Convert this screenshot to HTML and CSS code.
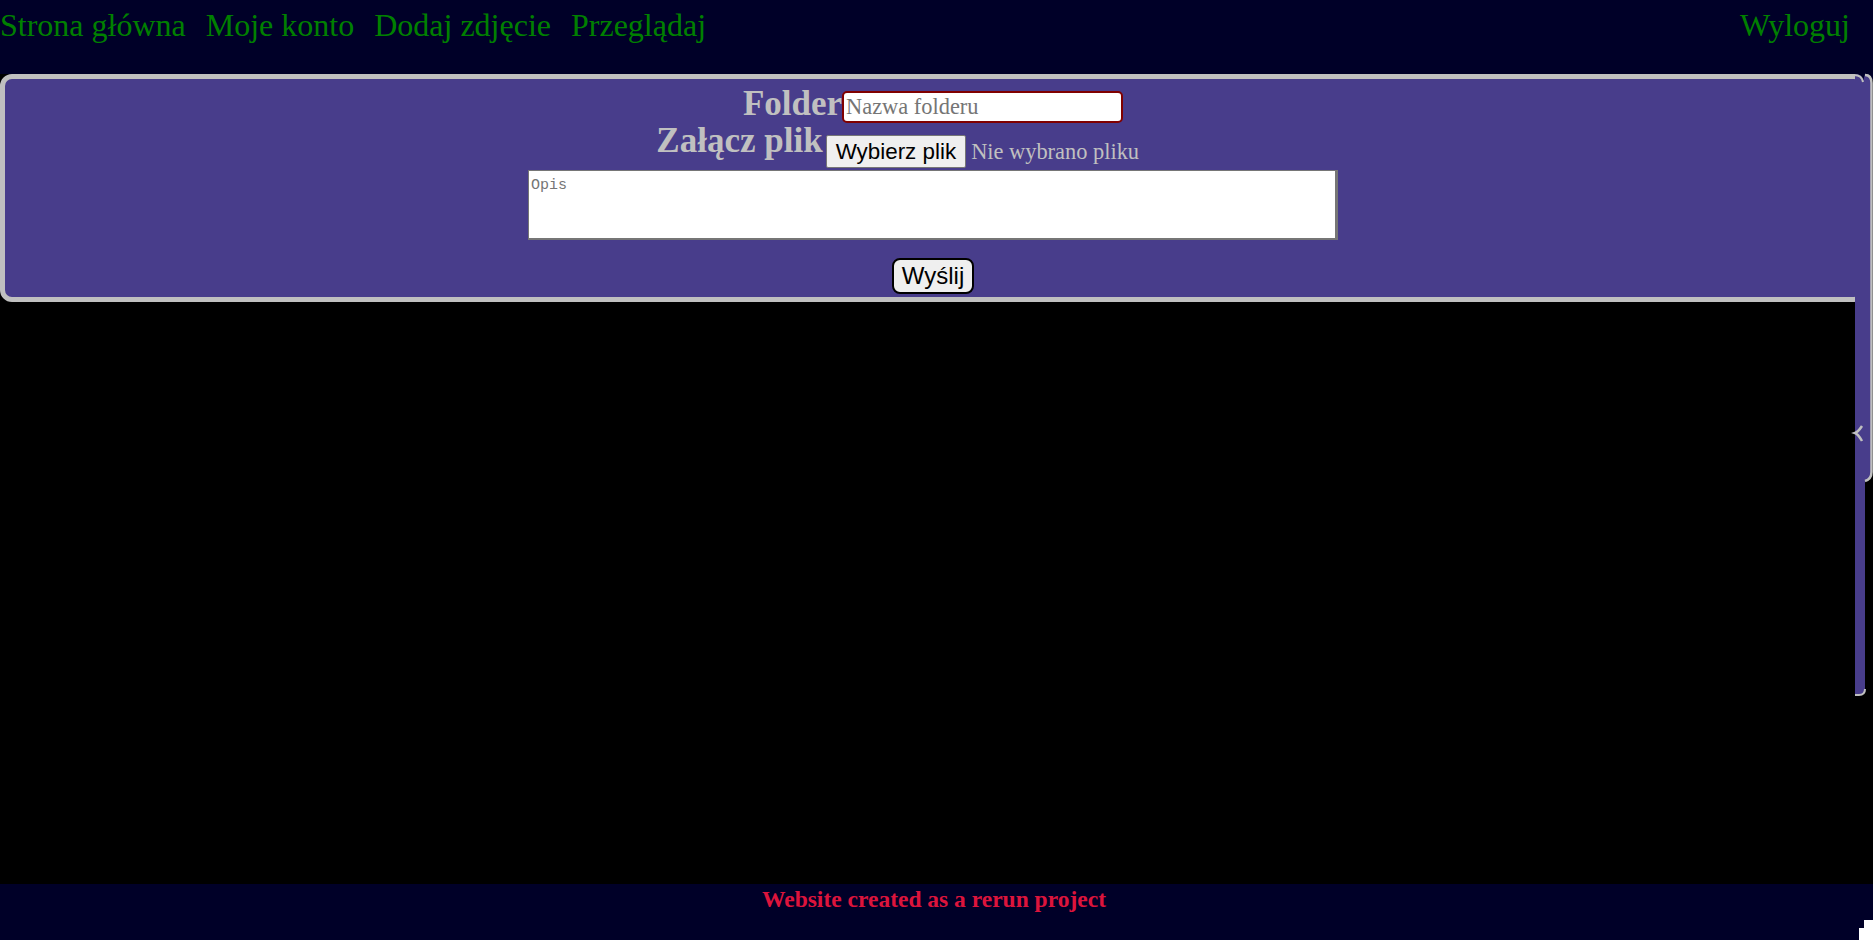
FILE: index.html
```html
<!DOCTYPE html>
<html lang="pl">
<head>
<meta charset="utf-8">
<title>Dodaj zdjęcie</title>
<link rel="stylesheet" href="styles.css">
</head>
<body>
<nav class="topnav">
  <div class="nav-left">
    <a href="#">Strona główna</a>
    <a href="#">Moje konto</a>
    <a href="#">Dodaj zdjęcie</a>
    <a href="#">Przeglądaj</a>
  </div>
  <a class="nav-right" href="#">Wyloguj</a>
</nav>
<main class="content">
  <form class="upload">
    <div class="row row-folder">
      <label class="field-label" for="folder">Folder</label>
      <input id="folder" class="text-input" type="text" placeholder="Nazwa folderu">
    </div>
    <div class="row row-file">
      <label class="field-label field-label-file" for="plik">Załącz plik</label>
      <label class="file" for="plik">
        <input id="plik" class="file-native" type="file">
        <span class="file-btn">Wybierz plik</span>
        <span class="file-name">Nie wybrano pliku</span>
      </label>
    </div>
    <textarea class="desc" placeholder="Opis"></textarea>
    <button class="submit" type="submit">Wyślij</button>
  </form>
  <svg class="edge" width="28" height="630" viewBox="0 0 28 630" aria-hidden="true">
    <rect x="10" y="0" width="18" height="10" fill="#000028"/>
    <path d="M10 4 Q18 4 18 11 L20 4 Q26.5 4 26.5 12 V402 Q26.5 410 20 410 H10 Z" fill="#483d8b"/>
    <path d="M10 405 H20 V619 Q20 625 14 625 H10 Z" fill="#483d8b"/>
    <path d="M9 5 Q17 5 18 12" fill="none" stroke="#c0c0c0" stroke-width="2"/>
    <path d="M20 5 Q26.5 5 26.5 13 V402 Q26.5 409 20 411" fill="none" stroke="#c0c0c0" stroke-width="2.5"/>
    <path d="M17 356 Q13 362 10 363 Q13 364 17 371" fill="none" stroke="#c0c0c0" stroke-width="2.5"/>
    <path d="M10 625 H14 Q20 625 20 619" fill="none" stroke="#c0c0c0" stroke-width="2"/>
  </svg>
</main>
<footer class="footer">
  <p class="footer-text">Website created as a rerun project</p>
  <div class="corner"></div>
</footer>
</body>
</html>
```
FILE: styles.css
```css
html, body {
  margin: 0;
  height: 940px;
  overflow: hidden;
}

body {
  background: #000;
  font-family: "Liberation Serif", "Times New Roman", serif;
}

.topnav {
  height: 74px;
  box-sizing: border-box;
  padding: 7px 23px 0 0;
  background: #000028;
  display: flex;
  justify-content: space-between;
  align-items: flex-start;
}

.nav-left {
  display: flex;
  gap: 20px;
}

.topnav a {
  color: #008000;
  font-size: 32px;
  line-height: normal;
  text-decoration: none;
}

.content {
  height: 810px;
  position: relative;
}

.upload {
  width: 1866px;
  box-sizing: border-box;
  border: 5px solid #c0c0c0;
  border-radius: 12px;
  background: #483d8b;
  padding: 6px 0 3px;
  display: flex;
  flex-direction: column;
  align-items: center;
}

.row {
  display: flex;
  justify-content: center;
  align-items: flex-start;
}

.row-folder {
  height: 37px;
}

.row-file {
  height: 48px;
}

.field-label {
  font-size: 35px;
  font-weight: bold;
  line-height: 37px;
  color: #c0c0c0;
}

.field-label-file {
  margin-right: 3px;
}

.text-input {
  margin: 6px 0 0;
  width: 281px;
  height: 32px;
  box-sizing: border-box;
  border: 2px solid #800000;
  border-radius: 5px;
  padding: 1px 2px;
  font: 22.4px "Liberation Serif", "Times New Roman", serif;
  background: #fff;
  color: #000;
  outline: none;
}

.text-input::placeholder {
  color: #757575;
}

.file {
  display: flex;
  align-items: baseline;
  margin-top: 13px;
  width: 384px;
  cursor: pointer;
}

.file-native {
  display: none;
}

.file-btn {
  font: 22.4px/25px "Liberation Sans", Arial, sans-serif;
  color: #000;
  background: #efefef;
  border: 1px solid #767676;
  border-radius: 2px;
  padding: 3px 9px;
  margin-right: 5px;
}

.file-name {
  font-size: 22.4px;
  color: #c0c0c0;
}

.desc {
  display: block;
  width: 810px;
  height: 70px;
  box-sizing: border-box;
  margin: 0;
  border: 2px solid #767676;
  border-top-width: 1px;
  border-left-width: 1px;
  border-right-width: 3px;
  padding: 6px 2px 2px;
  font: 15px "Liberation Mono", "DejaVu Sans Mono", monospace;
  background: #fff;
  resize: none;
}

.desc::placeholder {
  color: #757575;
}

.submit {
  margin-top: 18px;
  font: 24px/28px "Liberation Sans", Arial, sans-serif;
  padding: 2px 8px;
  border: 2px solid #000;
  border-radius: 8px;
  background: #efefef;
  color: #000;
}

.edge {
  position: absolute;
  top: -4px;
  right: 0;
  display: block;
}

.footer {
  position: relative;
  height: 56px;
  background: #000028;
  overflow: hidden;
  text-align: center;
}

.footer-text {
  margin: 0;
  padding: 2px 5px 0 0;
  font-size: 23.5px;
  font-weight: bold;
  color: #dc143c;
}

.corner {
  position: absolute;
  right: 0;
  bottom: 0;
  width: 9px;
  height: 20px;
  background: #fff;
}

.corner::before {
  content: "";
  position: absolute;
  right: 9px;
  bottom: 0;
  width: 5px;
  height: 12px;
  background: #fff;
}
```
